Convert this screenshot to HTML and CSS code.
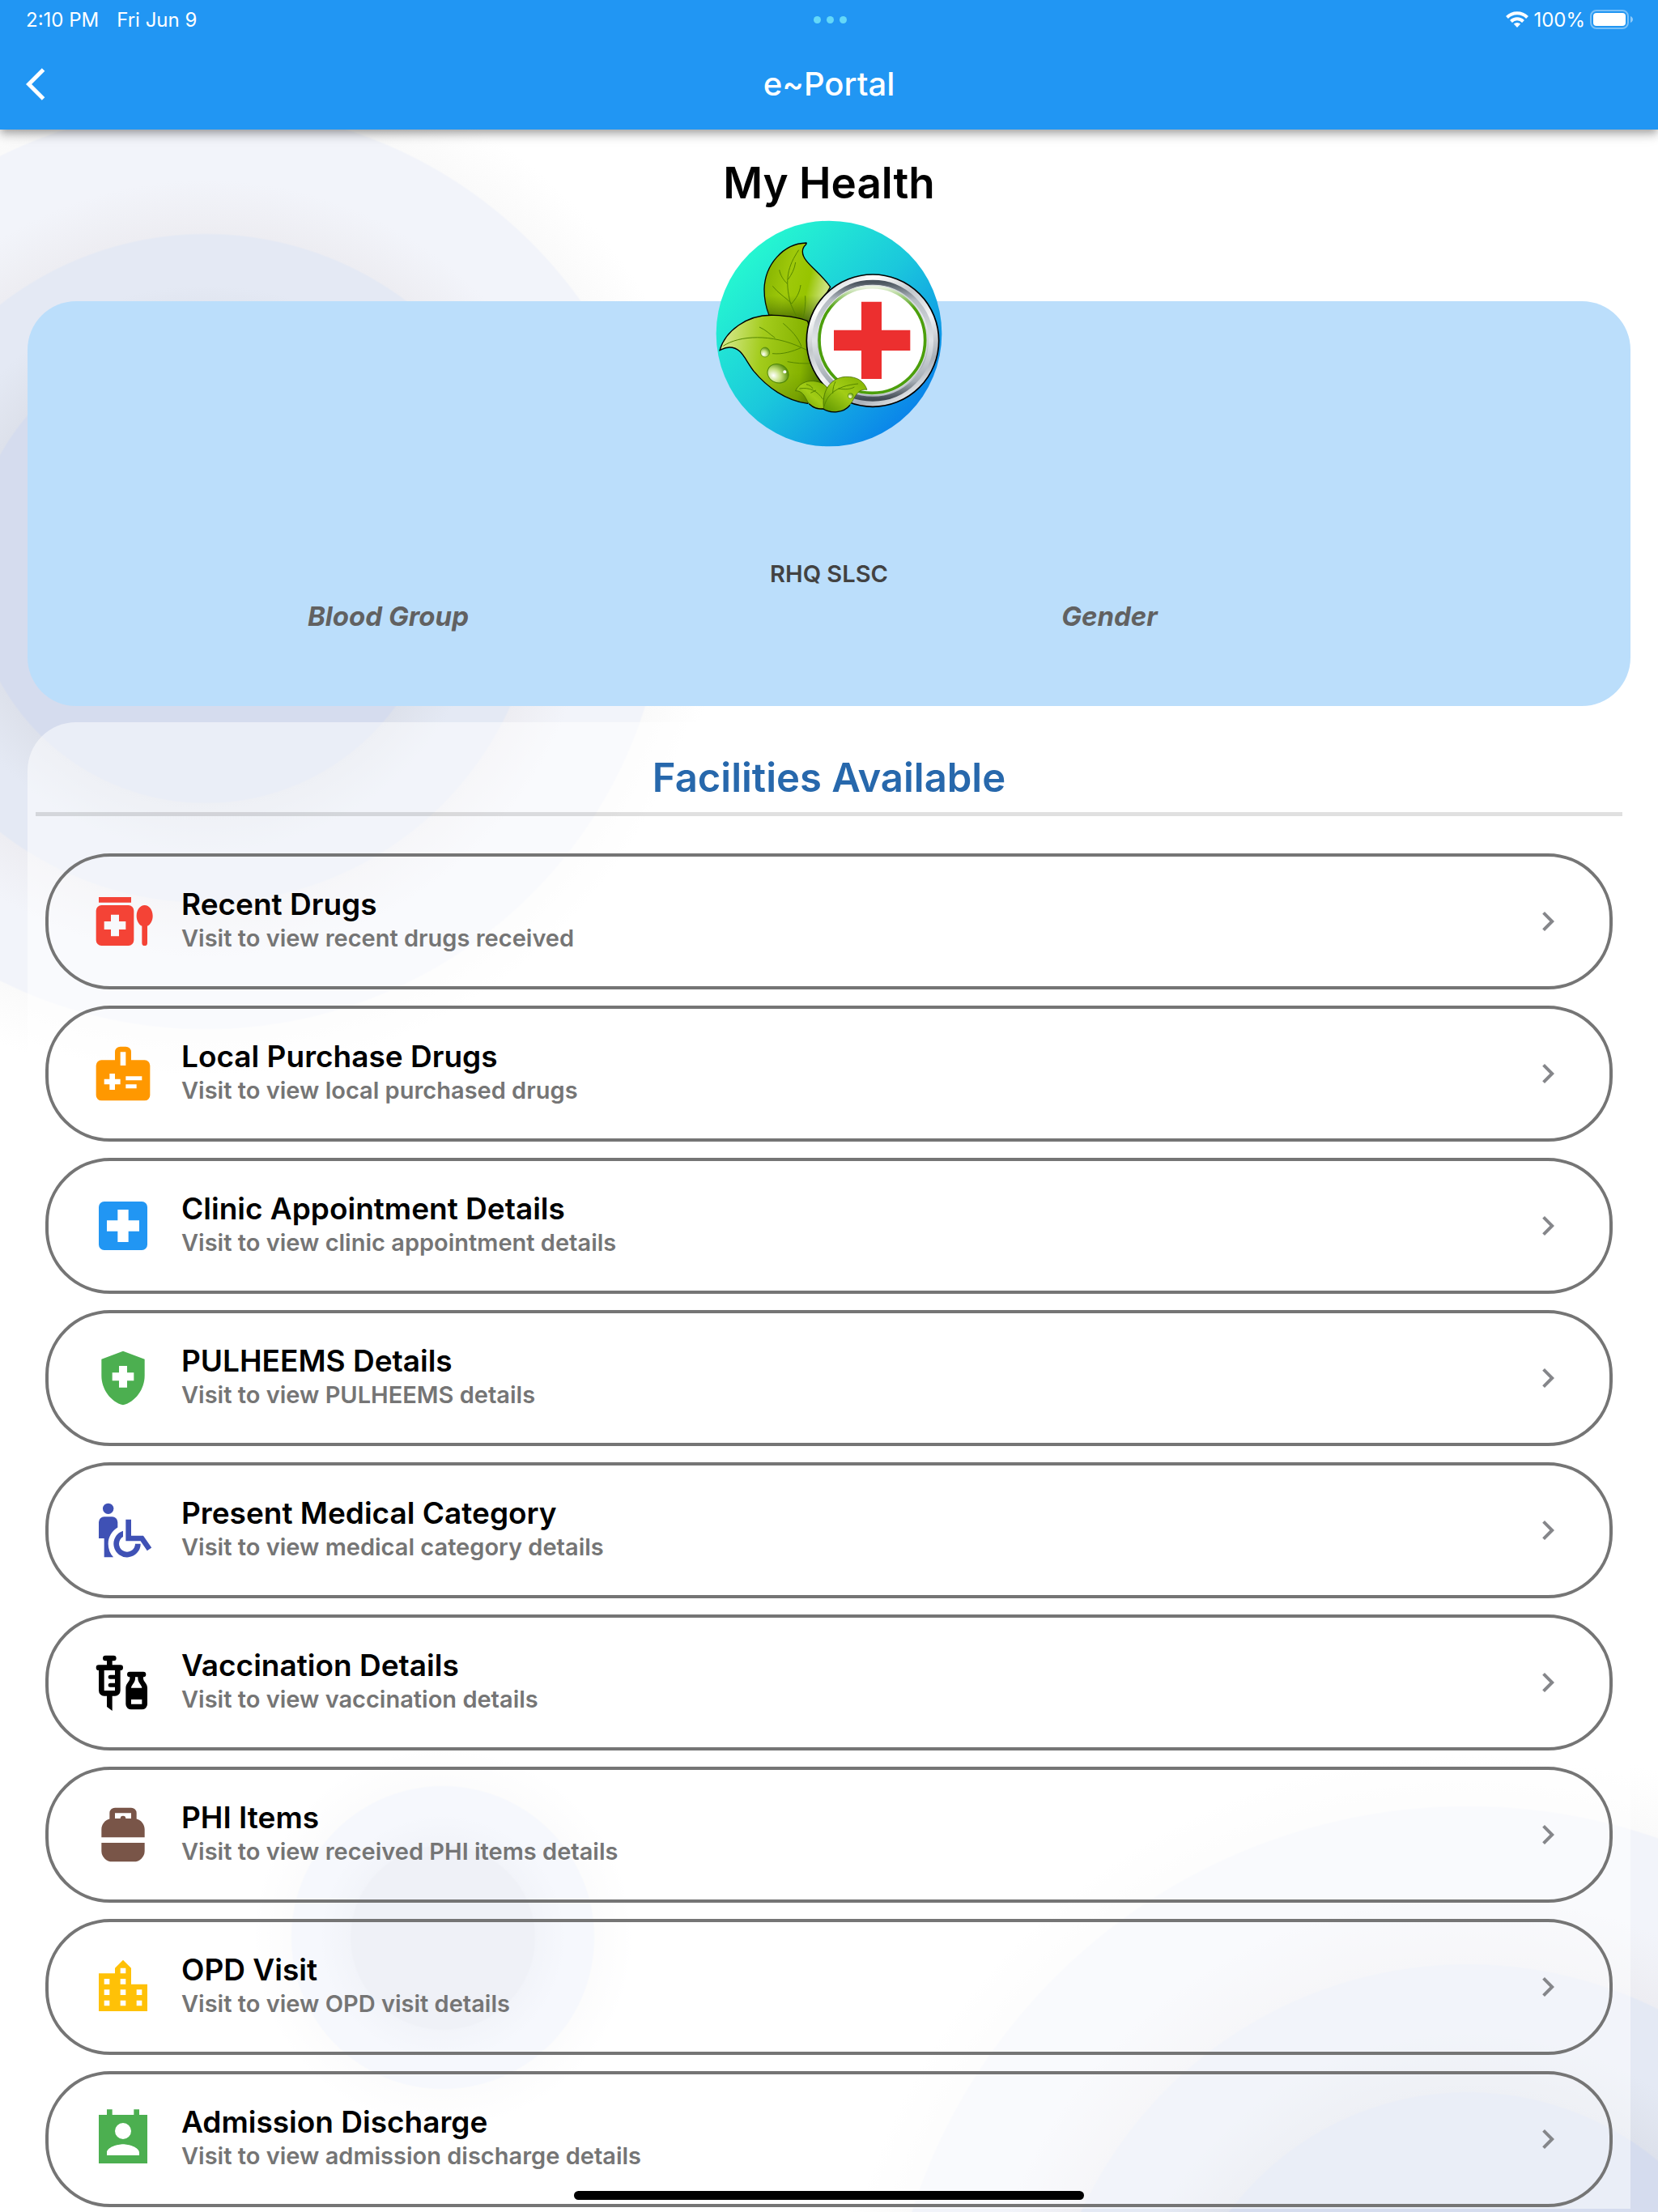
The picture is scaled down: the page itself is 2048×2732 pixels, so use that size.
FILE: index.html
```html
<!DOCTYPE html>
<html lang="en">
<head>
  <meta charset="UTF-8" />
  <meta name="viewport" content="width=device-width, initial-scale=1.0"/>
  <title>e~Portal</title>
  <link rel="stylesheet" href="styles.css">
</head>
<body>

  <header class="app-header">
    <div class="status-bar">
      <div class="status-group status-time">
        <span>2:10 PM</span>
        <span>Fri Jun 9</span>
      </div>
      <div class="status-dots"><i></i><i></i><i></i></div>
      <div class="status-group status-right">
        <svg class="wifi" viewBox="0 0 28 20" fill="none" stroke="#fff" stroke-width="4">
          <path d="M1.5 7.5a17.500 17.500 0 0 1 25 0"/>
          <path d="M6.500 12.500a10.500 10.500 0 0 1 15 0"/>
          <path d="M14 20l-4.200-4.400a6 6 0 0 1 8.400 0z" fill="#fff" stroke="none"/>
        </svg>
        <span>100%</span>
        <svg class="battery" viewBox="0 0 54 24">
          <rect x="1" y="1" width="46" height="22" rx="7" fill="none" stroke="#fff" stroke-opacity=".4" stroke-width="2"/>
          <rect x="4" y="4" width="40" height="16" rx="4" fill="#fff"/>
          <path d="M50 8c4 1.500 4 6.500 0 8z" fill="#fff" fill-opacity=".5"/>
        </svg>
      </div>
    </div>
    <div class="nav-bar">
      <button class="back-btn" aria-label="Back">
        <svg viewBox="0 0 24 24" fill="#fff"><path d="M11.670 3.870L9.900 2.100 0 12l9.900 9.900 1.770-1.770L3.540 12z"/></svg>
      </button>
      <div class="nav-title">e~Portal</div>
    </div>
  </header>

  <main class="content">
    <h1>My Health</h1>

    <svg class="logo" viewBox="102 276 840 840" role="img" aria-label="Health logo">
      <defs>
        <linearGradient id="sky" x1="0.1" y1="0.2" x2="0.82" y2="0.9">
          <stop offset="0" stop-color="#25f6d1"/>
          <stop offset="0.5" stop-color="#1bc8dc"/>
          <stop offset="1" stop-color="#0a84ea"/>
        </linearGradient>
        <linearGradient id="leafTop" x1="0" y1="0" x2="1" y2="0.3">
          <stop offset="0" stop-color="#7fae00"/>
          <stop offset="0.45" stop-color="#9fc90a"/>
          <stop offset="0.75" stop-color="#97c400"/>
          <stop offset="1" stop-color="#cbe27a"/>
        </linearGradient>
        <linearGradient id="leafSide" x1="0" y1="0.3" x2="1" y2="0.4">
          <stop offset="0" stop-color="#d9eb94"/>
          <stop offset="0.4" stop-color="#a3cc1c"/>
          <stop offset="0.8" stop-color="#86b300"/>
          <stop offset="1" stop-color="#4f7a00"/>
        </linearGradient>
        <linearGradient id="leafShade" x1="0" y1="0" x2="0" y2="1">
          <stop offset="0.65" stop-color="#3c6200" stop-opacity="0"/>
          <stop offset="1" stop-color="#2c4c00" stop-opacity="0.8"/>
        </linearGradient>
        <linearGradient id="leafSmall" x1="0" y1="1" x2="1" y2="0">
          <stop offset="0" stop-color="#5d9400"/>
          <stop offset="0.5" stop-color="#a2cd16"/>
          <stop offset="1" stop-color="#7fb000"/>
        </linearGradient>
        <linearGradient id="metal" x1="0.2" y1="0" x2="0.8" y2="1">
          <stop offset="0" stop-color="#c4cace"/>
          <stop offset="0.15" stop-color="#ffffff"/>
          <stop offset="0.35" stop-color="#c3c8cc"/>
          <stop offset="0.55" stop-color="#f4f5f7"/>
          <stop offset="0.8" stop-color="#a9b0b8"/>
          <stop offset="1" stop-color="#ffffff"/>
        </linearGradient>
        <linearGradient id="metalInner" x1="0" y1="0" x2="0" y2="1">
          <stop offset="0" stop-color="#4a545e"/>
          <stop offset="0.15" stop-color="#b4bbc2"/>
          <stop offset="0.5" stop-color="#dfe3e7"/>
          <stop offset="0.85" stop-color="#a4acb4"/>
          <stop offset="1" stop-color="#434c55"/>
        </linearGradient>
        <linearGradient id="rim" x1="0" y1="0" x2="0" y2="1">
          <stop offset="0" stop-color="#e9f3df"/>
          <stop offset="0.2" stop-color="#4c9f0c"/>
        </linearGradient>
        <radialGradient id="drop" cx="0.35" cy="0.7" r="0.7">
          <stop offset="0" stop-color="#ffffff"/>
          <stop offset="0.5" stop-color="#c4e07a"/>
          <stop offset="1" stop-color="#5f9410"/>
        </radialGradient>
      </defs>
      <circle cx="522" cy="696" r="418" fill="url(#sky)"/>
      <!-- large leaves -->
      <path d="M438 360c4 8-14 8-14 32 0 40 60 70 103 131l-80 137-147-32c-8-20-18-50-18-96 2-90 70-170 156-172z" fill="url(#leafTop)" stroke="#000" stroke-width="4"/>
      <path d="M438 360c4 8-14 8-14 32 0 40 60 70 103 131l-80 137-147-32c-8-20-18-50-18-96 2-90 70-170 156-172z" fill="url(#leafShade)"/>
      <path d="M410 386c-40 60-54 110-30 200l22 48M383 584c-20-20-50-38-70-64M368 512c-16-16-26-32-30-52M370 496c14-20 24-38 28-64M383 586c18-22 30-40 34-70M426 640c6-26 10-54 8-84" fill="none" stroke="#568600" stroke-width="3"/>
      <path d="M117 758c20-70 100-134 200-130 50 2 96 8 126 22l60 240-60 65c-80-10-150-60-200-120-34-44-44-88-90-88-20 0-28 8-36 11z" fill="url(#leafSide)" stroke="#000" stroke-width="4"/>
      <path d="M117 758c20-70 100-134 200-130 50 2 96 8 126 22l60 240-60 65c-80-10-150-60-200-120-34-44-44-88-90-88-20 0-28 8-36 11z" fill="url(#leafShade)" opacity="0.3"/>
      <path d="M130 742c60-40 180-46 290 6l40 18M322 712c-20-14-34-30-58-40M420 744c-14-36-36-58-68-86M420 748c-34 14-68 26-108 22M460 806c-36 2-60 0-92-6" fill="none" stroke="#568600" stroke-width="3"/>
      <ellipse cx="285" cy="765" rx="17" ry="18" fill="url(#drop)" stroke="#4f850a" stroke-width="2"/>
      <ellipse cx="333" cy="844" rx="40" ry="34" transform="rotate(25 333 844)" fill="url(#drop)" stroke="#4f850a" stroke-width="3"/>
      <circle cx="358" cy="838" r="6" fill="#fff"/>
      <!-- metal badge with the cross -->
      <circle cx="684" cy="722" r="245" fill="url(#metal)" stroke="#000" stroke-width="5"/>
      <circle cx="684" cy="722" r="216" fill="none" stroke="url(#metalInner)" stroke-width="18"/>
      <circle cx="684" cy="720" r="204" fill="#d5dade"/>
      <circle cx="682" cy="720" r="196" fill="#fff" stroke="url(#rim)" stroke-width="11"/>
      <path d="M642 578h75v105h106v76H717v105h-75V759H540v-76h102z" fill="#ec2f2f"/>
      <!-- small leaves -->
      <path d="M398 908c10-24 38-38 66-36 26 2 44 12 54 28l-14 76c-26 4-50-8-60-26-12-22-20-42-46-42z" fill="url(#leafSmall)" stroke="#355c00" stroke-width="2"/>
      <path d="M503 976c-10-60 20-116 80-120 44-2 70 18 80 48-30-4-40 16-54 42-20 36-64 52-106 30z" fill="url(#leafSmall)" stroke="#355c00" stroke-width="2"/>
      <path d="M448 956c20 18 30 18 52 19 30 18 76 16 100-14" fill="none" stroke="#000" stroke-width="4"/>
      <path d="M504 966c10-40 40-76 126-84M536 918c0-20 4-32 10-44M556 900c30 4 46 2 60-6M412 900c40-6 66 8 88 40M462 900c-4-8-14-14-24-16M474 906l-20 10" fill="none" stroke="#568600" stroke-width="3"/>
      <circle cx="602" cy="927" r="10" fill="url(#drop)" stroke="#4f850a" stroke-width="2"/>
    </svg>

    <section class="profile-card">
      <p class="unit">RHQ SLSC</p>
      <div class="profile-fields">
        <span>Blood Group</span>
        <span>Gender</span>
      </div>
    </section>

    <section class="facilities">
      <h2>Facilities Available</h2>
      <hr>
      <div class="facility-list">

        <button class="facility">
          <svg class="facility-icon red" viewBox="0 0 24 24"><path fill-rule="evenodd" d="M3 3h12v2H3zM4 6h10a2 2 0 0 1 2 2v11a2 2 0 0 1-2 2H4a2 2 0 0 1-2-2V8a2 2 0 0 1 2-2zM7.500 9.500V12H5v3h2.500v2.500h3V15H13v-3h-2.500V9.500zM20 6c-1.680 0-3 1.760-3 4 0 1.770.830 3.220 2 3.760V20a1 1 0 0 0 2 0v-6.240c1.170-.540 2-1.990 2-3.760 0-2.240-1.320-4-3-4z"/></svg>
          <span class="facility-text"><strong>Recent Drugs</strong><small>Visit to view recent drugs received</small></span>
          <svg class="chevron" viewBox="0 0 24 24"><path d="M10 6L8.590 7.410 13.170 12l-4.580 4.590L10 18l6-6z"/></svg>
        </button>

        <button class="facility">
          <svg class="facility-icon orange" viewBox="0 0 24 24"><path fill-rule="evenodd" d="M20 7h-5V4a2 2 0 0 0-2-2h-2a2 2 0 0 0-2 2v3H4a2 2 0 0 0-2 2v11a2 2 0 0 0 2 2h16a2 2 0 0 0 2-2V9a2 2 0 0 0-2-2zM11 4h2v5h-2zM7 12h2v2h2v2H9v2H7v-2H5v-2h2zM13 13h6v1.500h-6zM13 16h4v1.500h-4z"/></svg>
          <span class="facility-text"><strong>Local Purchase Drugs</strong><small>Visit to view local purchased drugs</small></span>
          <svg class="chevron" viewBox="0 0 24 24"><path d="M10 6L8.590 7.410 13.170 12l-4.580 4.590L10 18l6-6z"/></svg>
        </button>

        <button class="facility">
          <svg class="facility-icon blue" viewBox="0 0 24 24"><path fill-rule="evenodd" d="M19 3H5a2 2 0 0 0-2 2v14a2 2 0 0 0 2 2h14a2 2 0 0 0 2-2V5a2 2 0 0 0-2-2zM18 14h-4v4h-4v-4H6v-4h4V6h4v4h4z"/></svg>
          <span class="facility-text"><strong>Clinic Appointment Details</strong><small>Visit to view clinic appointment details</small></span>
          <svg class="chevron" viewBox="0 0 24 24"><path d="M10 6L8.590 7.410 13.170 12l-4.580 4.590L10 18l6-6z"/></svg>
        </button>

        <button class="facility">
          <svg class="facility-icon green" viewBox="0 0 24 24"><path fill-rule="evenodd" d="M12 2L4 5v6.090c0 5.050 3.410 9.760 8 10.910 4.590-1.150 8-5.860 8-10.910V5zM10.500 13H8v-3h2.500V7.500h3V10H16v3h-2.500v2.500h-3z"/></svg>
          <span class="facility-text"><strong>PULHEEMS Details</strong><small>Visit to view PULHEEMS details</small></span>
          <svg class="chevron" viewBox="0 0 24 24"><path d="M10 6L8.590 7.410 13.170 12l-4.580 4.590L10 18l6-6z"/></svg>
        </button>

        <button class="facility">
          <svg class="facility-icon indigo" viewBox="0 0 24 24"><circle cx="6.500" cy="4" r="2"/><path d="M10 10.950V9a2 2 0 0 0-2-2H5a2 2 0 0 0-2 2v6h2v7h3.430A7.500 7.500 0 0 1 6.500 17c0-2.560 1.400-4.800 3.500-6.050zM12 14.400v-2.160A5 5 0 1 0 18.500 17h-2a3 3 0 1 1-4.500-2.600zM15 8h-2v8h5.460l2.470 3.570 1.640-1.140L19.500 14H15z"/></svg>
          <span class="facility-text"><strong>Present Medical Category</strong><small>Visit to view medical category details</small></span>
          <svg class="chevron" viewBox="0 0 24 24"><path d="M10 6L8.590 7.410 13.170 12l-4.580 4.590L10 18l6-6z"/></svg>
        </button>

        <button class="facility">
          <svg class="facility-icon black" viewBox="0 0 24 24"><path fill-rule="evenodd" d="M11 5.500H8V4h.500a1 1 0 0 0 0-2h-3a1 1 0 0 0 0 2H6v1.500H3a1 1 0 0 0 0 2V15a2 2 0 0 0 2 2h1v4l2 1.500V17h1a2 2 0 0 0 2-2V7.500a1 1 0 0 0 0-2zM9 9.250H7.250a.750.750 0 0 0 0 1.500H9v1.500H7.250a.750.750 0 0 0 0 1.500H9V15H5V7.500h4zM19.500 10.500V10a1 1 0 0 0 0-2h-5a1 1 0 0 0 0 2v.500c0 .500-.300 1-.750 1.570C13.300 12.660 13 13.300 13 14v6a2 2 0 0 0 2 2h4a2 2 0 0 0 2-2v-6c0-.700-.300-1.340-.750-1.930-.450-.570-.750-1.070-.750-1.570zM16.500 10.500V10h1v.500c0 1.600 1.500 2.500 1.500 3.500h-4c0-1 1.500-1.900 1.500-3.500zM15 18.300h4V20h-4z"/></svg>
          <span class="facility-text"><strong>Vaccination Details</strong><small>Visit to view vaccination details</small></span>
          <svg class="chevron" viewBox="0 0 24 24"><path d="M10 6L8.590 7.410 13.170 12l-4.580 4.590L10 18l6-6z"/></svg>
        </button>

        <button class="facility">
          <svg class="facility-icon brown" viewBox="0 0 24 24"><path fill-rule="evenodd" d="M4 15v3a4 4 0 0 0 4 4h8a4 4 0 0 0 4-4v-3zM20 13v-3c0-1.860-1.280-3.410-3-3.860V4a2 2 0 0 0-2-2H9a2 2 0 0 0-2 2v2.140c-1.720.450-3 2-3 3.860v3zM9 4h6v2h-2a1 1 0 0 0-2 0H9z"/></svg>
          <span class="facility-text"><strong>PHI Items</strong><small>Visit to view received PHI items details</small></span>
          <svg class="chevron" viewBox="0 0 24 24"><path d="M10 6L8.590 7.410 13.170 12l-4.580 4.590L10 18l6-6z"/></svg>
        </button>

        <button class="facility">
          <svg class="facility-icon amber" viewBox="0 0 24 24"><path d="M15 11V5l-3-3-3 3v2H3v14h18V11h-6zm-8 8H5v-2h2v2zm0-4H5v-2h2v2zm0-4H5V9h2v2zm6 8h-2v-2h2v2zm0-4h-2v-2h2v2zm0-4h-2V9h2v2zm0-4h-2V5h2v2zm6 12h-2v-2h2v2zm0-4h-2v-2h2v2z"/></svg>
          <span class="facility-text"><strong>OPD Visit</strong><small>Visit to view OPD visit details</small></span>
          <svg class="chevron" viewBox="0 0 24 24"><path d="M10 6L8.590 7.410 13.170 12l-4.580 4.590L10 18l6-6z"/></svg>
        </button>

        <button class="facility">
          <svg class="facility-icon green" viewBox="0 0 24 24"><path fill-rule="evenodd" d="M21 3h-3V1h-2v2H8V1H6v2H3v18h18zM12 6a3 3 0 1 1 0 6 3 3 0 0 1 0-6zM18 18H6v-1c0-2 4-3.100 6-3.100s6 1.100 6 3.100z"/></svg>
          <span class="facility-text"><strong>Admission Discharge</strong><small>Visit to view admission discharge details</small></span>
          <svg class="chevron" viewBox="0 0 24 24"><path d="M10 6L8.590 7.410 13.170 12l-4.580 4.590L10 18l6-6z"/></svg>
        </button>

      </div>
    </section>
  </main>

  <div class="home-indicator"></div>

</body>
</html>
```
FILE: styles.css
```css
* {
  box-sizing: border-box;
}

body {
  margin: 0;
  min-height: 100vh;
  font-family: Inter, "Liberation Sans", sans-serif;
  color: #000;
  background-color: #fff;
  /* big circles top left and bottom right, small one bottom left */
  background-image:
    radial-gradient(circle at 254px 702px, #d5dcee 289px, #dde1eb 291px, #e4e9f4 350px, #e4e9f4 412px, #ededf2 414px, #f2f4fa 480px, #f2f4fa 568px, #fafafa 570px, rgba(255, 255, 255, 0) 640px),
    radial-gradient(circle at calc(100% - 235px) calc(100% + 220px), #d5dcee 367px, #dde1eb 369px, #e4e9f4 440px, #e4e9f4 525px, #ededf2 527px, #f2f4fa 610px, #f2f4fa 720px, #fafafa 722px, rgba(255, 255, 255, 0) 800px),
    radial-gradient(circle at 547px calc(100% - 339px), #dfe3ee 113px, #e5e9f4 115px, #ecf0fa 150px, #ecf0fa 186px, #f8f8f9 188px, rgba(255, 255, 255, 0) 240px);
}

button {
  border: none;
  padding: 0;
  background: none;
  font-family: inherit;
  color: inherit;
  cursor: pointer;
}

svg {
  display: block;
}

/* header */
.app-header {
  position: relative;
  height: 160px;
  background-color: #2196f3;
  color: #fff;
  box-shadow: 0 4px 8px -2px rgba(0, 0, 0, 0.2), 0 8px 10px rgba(0, 0, 0, 0.14), 0 2px 20px rgba(0, 0, 0, 0.12);
}

.status-bar {
  display: grid;
  grid-template-columns: 1fr auto 1fr;
  align-items: center;
  height: 48px;
  padding: 0 30px 0 32px;
  font-size: 24px;
}

.status-group {
  display: flex;
  align-items: center;
}

.status-time {
  gap: 22px;
}

.status-right {
  justify-content: flex-end;
  gap: 6px;
}

.status-dots {
  display: flex;
  gap: 7px;
}

.status-dots i {
  width: 9px;
  height: 9px;
  border-radius: 50%;
  background-color: #64d8f8;
}

.wifi {
  width: 28px;
  height: 20px;
}

.battery {
  width: 54px;
  height: 24px;
}

.nav-bar {
  display: grid;
  grid-template-columns: 48px 1fr 48px;
  align-items: center;
  height: 112px;
  padding: 0 32px;
}

.back-btn svg {
  width: 48px;
  height: 48px;
}

.nav-title {
  padding-bottom: 2px;
  text-align: center;
  font-size: 40px;
  font-weight: 500;
}

/* content */
.content {
  padding: 20px 34px 4px;
}

h1 {
  margin: 0;
  text-align: center;
  font-size: 53px;
  line-height: 92px;
  font-weight: 600;
}

.logo {
  position: relative;
  width: 280px;
  height: 280px;
  margin: 0 auto -180px;
}

.profile-card {
  padding: 317px 0 89px;
  background-color: #bbdefb;
  border-radius: 60px;
}

.unit {
  margin: 0 0 10px;
  text-align: center;
  font-size: 29px;
  line-height: 40px;
  font-weight: 600;
  color: #424242;
}

.profile-fields {
  display: grid;
  grid-template-columns: 45% 45%;
  text-align: center;
  font-size: 33px;
  line-height: 44px;
  font-weight: 700;
  font-style: italic;
  color: #616161;
}

.facilities {
  margin-top: 20px;
  padding: 41px 10px 2px;
  background-color: rgba(255, 255, 255, 0.5);
  border-radius: 60px 60px 0 0;
}

h2 {
  margin: 0;
  text-align: center;
  font-size: 49px;
  line-height: 56px;
  font-weight: 600;
  color: #2768ac;
}

hr {
  height: 5px;
  margin: 14px 0 46px;
  border: none;
  background-color: rgba(0, 0, 0, 0.12);
}

.facility-list {
  display: flex;
  flex-direction: column;
  gap: 20px;
  padding: 0 12px;
}

.facility {
  display: flex;
  align-items: center;
  height: 168px;
  padding: 0 52px;
  border: 4px solid #757575;
  border-radius: 80px;
  text-align: left;
}

.facility-icon {
  width: 80px;
  height: 80px;
  margin-right: 32px;
  fill: currentColor;
}

.facility-text {
  flex: 1;
}

.facility-text strong,
.facility-text small {
  display: block;
  font-weight: 600;
  line-height: 42px;
}

.facility-text strong {
  font-size: 37px;
}

.facility-text small {
  font-size: 29px;
  color: #757575;
}

.chevron {
  width: 48px;
  height: 48px;
  fill: #85868a;
}

.red { color: #f44336; }
.orange { color: #ff9800; }
.blue { color: #2196f3; }
.green { color: #4caf50; }
.indigo { color: #3f51b5; }
.black { color: #000; }
.brown { color: #795548; }
.amber { color: #ffc107; }

.home-indicator {
  position: fixed;
  left: 50%;
  bottom: 15px;
  width: 630px;
  height: 11px;
  margin-left: -315px;
  border-radius: 6px;
  background-color: #000;
}
```
